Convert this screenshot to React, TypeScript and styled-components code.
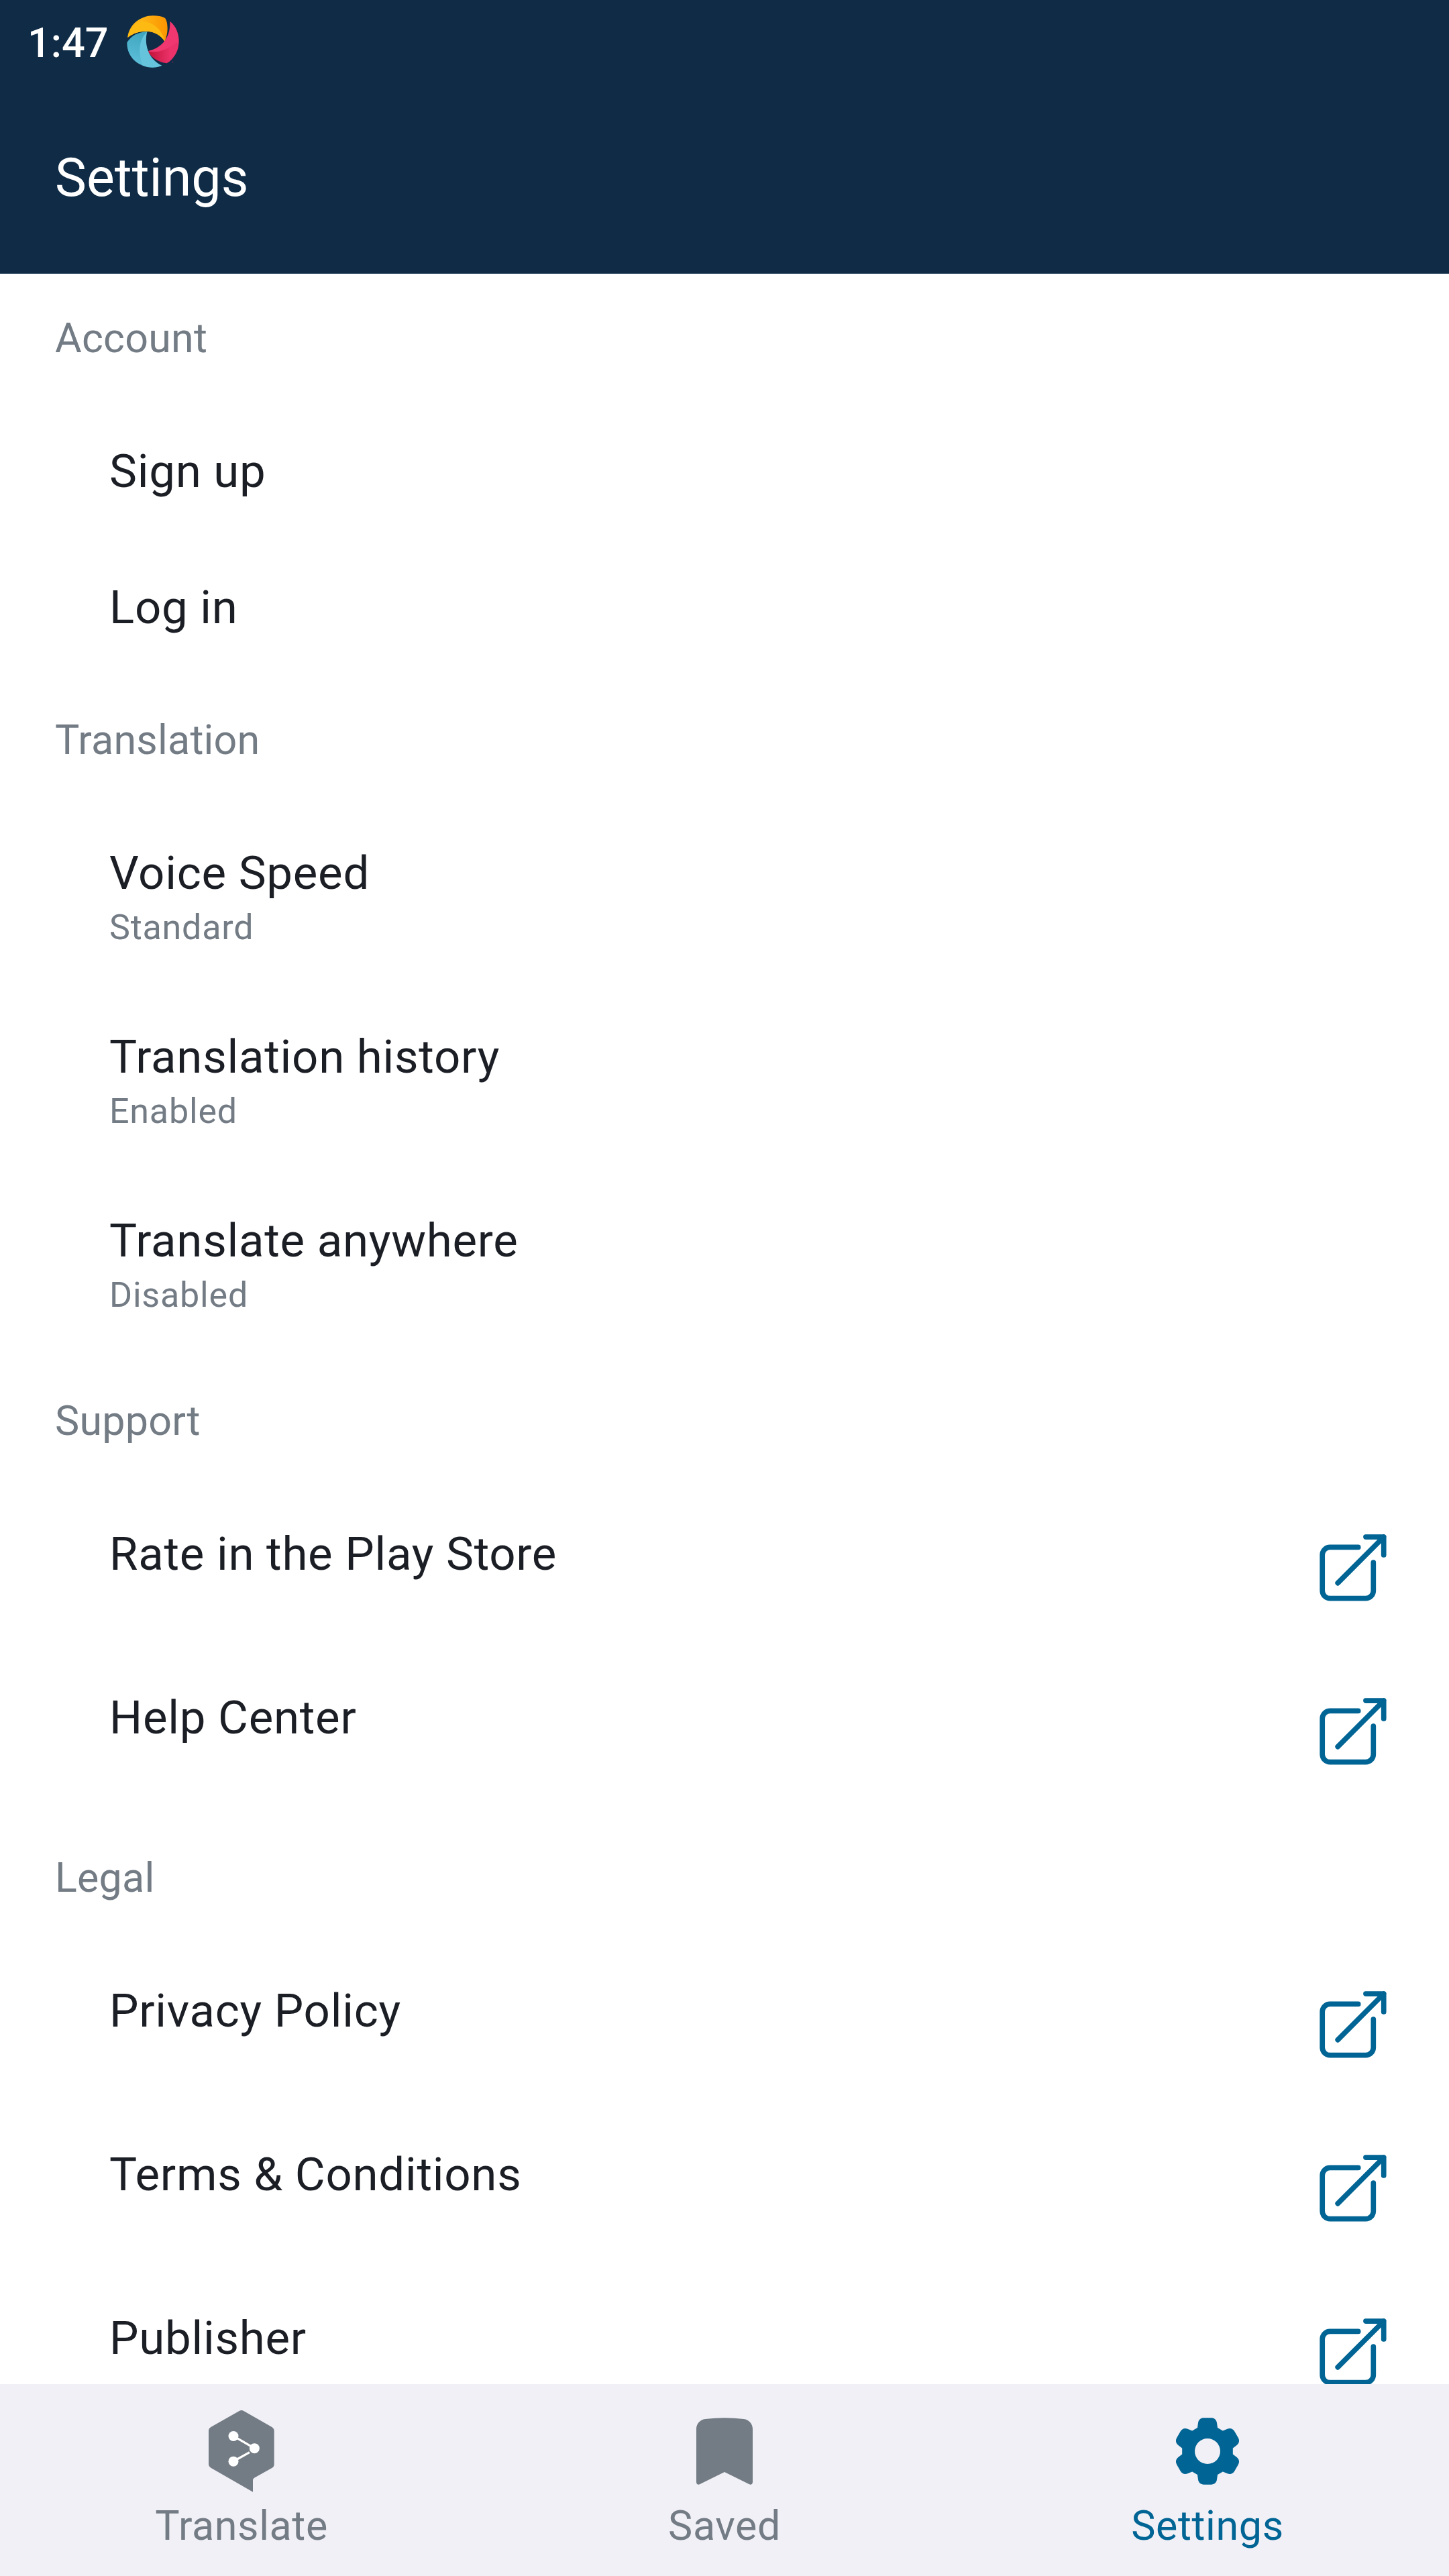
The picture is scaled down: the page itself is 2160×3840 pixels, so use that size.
import React from "react";
import styled, { createGlobalStyle } from "styled-components";

const color = {
  navy: "#0f2b46",
  blue: "#006494",
  grey: "#737b84",
  ink: "#1b1e25",
  bar: "#f1f0f6",
};

const GlobalStyle = createGlobalStyle`
  *, *::before, *::after { box-sizing: border-box; }
  body {
    margin: 0;
    background: #fff;
    font-family: Roboto, "Noto Sans", sans-serif;
  }
`;

const Screen = styled.div`
  display: flex;
  flex-direction: column;
  width: 2160px;
  height: 3840px;
  overflow: hidden;
`;

const Header = styled.header`
  flex: none;
  background: ${color.navy};
  color: #fff;
`;

const StatusBar = styled.div`
  display: flex;
  align-items: center;
  gap: 27.500px;
  height: 123px;
  padding-left: 41px;
`;

const Clock = styled.span`
  padding-top: 4px;
  font-size: 61.3px;
  font-weight: 500;
  line-height: 72px;
`;

const AppBar = styled.div`
  display: flex;
  align-items: center;
  height: 285px;
  padding: 0 82px 1px;
`;

const Title = styled.h1`
  margin: 0;
  font-size: 79px;
  font-weight: 400;
  line-height: 92px;
`;

const Content = styled.main`
  flex: 1;
  min-height: 0;
  overflow: hidden;
`;

const SectionTitle = styled.h2`
  height: 193px;
  margin: 0;
  padding: 60px 82px 0;
  color: ${color.grey};
  font-size: 61px;
  font-weight: 400;
  line-height: 72px;
  letter-spacing: 0.2px;
`;

const Row = styled.div`
  display: flex;
  justify-content: space-between;
  padding: 61px 82px 61px 163px;
`;

const RowText = styled.div`
  display: flex;
  flex-direction: column;
`;

const RowTitle = styled.span`
  color: ${color.ink};
  font-size: 69px;
  line-height: 81px;
  letter-spacing: 0.72px;
`;

const RowValue = styled.span`
  margin-top: 10px;
  color: ${color.grey};
  font-size: 52px;
  line-height: 61px;
  letter-spacing: 0.8px;
`;

const Icon = styled.svg`
  display: block;
  flex: none;
  width: 122px;
  height: 122px;
`;

const NavBar = styled.nav`
  display: grid;
  flex: none;
  grid-template-columns: repeat(3, 1fr);
  height: 286px;
  background: ${color.bar};
`;

const NavItem = styled.div<{ $active?: boolean }>`
  display: flex;
  flex-direction: column;
  align-items: center;
  gap: 14px;
  padding-top: 39px;
  color: ${(p) => (p.$active ? color.blue : color.grey)};
`;

const NavLabel = styled.span`
  font-size: 61px;
  line-height: 72px;
  letter-spacing: 0.6px;
`;

const LogoSvg = styled.svg`
  display: block;
  width: 78px;
  height: 78px;
`;

function AppLogo() {
  return (
    <LogoSvg viewBox="566 67 234 234">
      <defs>
        <linearGradient id="orange" x1="0" x2="1">
          <stop offset="0.35" stopColor="#fdb515" />
          <stop offset="1" stopColor="#fb9400" />
        </linearGradient>
        <linearGradient id="red" x1="0" x2="1">
          <stop offset="0" stopColor="#bf1238" />
          <stop offset="0.75" stopColor="#ec326a" />
        </linearGradient>
        <linearGradient id="teal" x1="0.6" y1="0" x2="0.4" y2="1">
          <stop offset="0" stopColor="#3fa5bf" />
          <stop offset="1" stopColor="#5fc0da" />
        </linearGradient>
      </defs>
      <path fill="url(#orange)" d="M570 166C575 108 628 68 683 68C704 68 722 71 736 78C744 84 748 106 748 126C748 146 742 166 736 184C720 156 689 138 652 138C621 138 594 147 570 166Z" />
      <path fill="#fdba12" d="M570 166C575 130 597 106 626 94C682 92 725 130 736 184C720 156 689 138 652 138C621 138 594 147 570 166Z" />
      <path fill="url(#red)" d="M659 227C710 227 756 196 785 186L797 205C791 236 773 264 745 281C706 276 678 258 659 227Z" />
      <path fill="#f0376f" d="M759 93C783 112 798 143 799 178C799 188 798 197 797 205C793 200 789 195 788 189C752 216 708 238 659 227C722 213 762 169 759 93Z" />
      <path fill="url(#teal)" d="M567 188C588 156 618 141 657 140C640 185 625 240 640 292C598 278 566 240 567 188Z" />
      <path fill="#65c3dc" d="M657 140C643 196 661 262 723 291C710 297 696 300 681 300C665 300 650 297 637 291C616 235 618 177 657 140Z" />
      <text x="766" y="282" fill="#ec326a" fontSize="12" fontWeight="700">™</text>
    </LogoSvg>
  );
}

function ExternalIcon() {
  return (
    <Icon viewBox="0 0 122 122" fill="none" stroke={color.blue} strokeWidth="7.7" strokeLinecap="round" strokeLinejoin="round">
      <path d="M68.7 30.4H26.8A11.5 11.5 0 0 0 15.2 42V95.2A11.5 11.5 0 0 0 26.8 106.7H79.8A11.5 11.5 0 0 0 91.3 95.2V53.2" />
      <path d="M38.2 83.8L106.7 15.1M79.9 15.1H106.7V41.9" />
    </Icon>
  );
}

function TranslateIcon() {
  return (
    <Icon viewBox="297 159 366 366">
      <path fill="currentColor" d="M470 162Q480 156 490 162L616 234Q626 241 626 251V401Q626 411 616 417L537 461Q531 465 531 471V524L343 416Q333 410 333 400V251Q333 241 343 234Z" />
      <path stroke="#fff" strokeWidth="10" d="M444 274L538 329M444 387L516 347" />
      <circle cx="444" cy="274.500" r="22.500" fill="#fff" />
      <circle cx="538" cy="329" r="22.500" fill="#fff" />
      <circle cx="444" cy="387.500" r="22.500" fill="#fff" />
    </Icon>
  );
}

function SavedIcon() {
  return (
    <Icon viewBox="177 159 366 366" fill="currentColor">
      <path d="M234 242C234 219 252 200 274 198Q360 187 446 198C468 200 486 219 486 242V480C486 488 479 494 471 490L360 435L249 490C241 494 234 488 234 480Z" />
    </Icon>
  );
}

// One tooth of the gear, centred on the origin and pointing up.
const tooth: [number, number][] = [
  [-45, -105], [-42, -127],
  [-40, -141], [-30, -149], [-16, -149],
  [16, -149],
  [30, -149], [40, -141], [42, -127],
  [45, -105],
];

function gearPath() {
  const parts: string[] = [];
  for (let i = 0; i < 6; i++) {
    const a = (i * Math.PI) / 3;
    const p = tooth.map(([x, y]) =>
      `${(x * Math.cos(a) - y * Math.sin(a)).toFixed(2)} ${(x * Math.sin(a) + y * Math.cos(a)).toFixed(2)}`
    );
    parts.push(`${i ? "L" : "M"}${p[0]}L${p[1]}C${p[2]} ${p[3]} ${p[4]}L${p[5]}C${p[6]} ${p[7]} ${p[8]}L${p[9]}`);
  }
  return `${parts.join("")}ZM57 0A57 57 0 1 0 -57 0A57 57 0 1 0 57 0Z`;
}

function GearIcon() {
  return (
    <Icon viewBox="-183 -183 366 366" fill="currentColor">
      <path fillRule="evenodd" d={gearPath()} />
    </Icon>
  );
}

type Item = { title: string; value?: string; external?: boolean };

const sections: { title: string; items: Item[] }[] = [
  { title: "Account", items: [{ title: "Sign up" }, { title: "Log in" }] },
  {
    title: "Translation",
    items: [
      { title: "Voice Speed", value: "Standard" },
      { title: "Translation history", value: "Enabled" },
      { title: "Translate anywhere", value: "Disabled" },
    ],
  },
  {
    title: "Support",
    items: [
      { title: "Rate in the Play Store", external: true },
      { title: "Help Center", external: true },
    ],
  },
  {
    title: "Legal",
    items: [
      { title: "Privacy Policy", external: true },
      { title: "Terms & Conditions", external: true },
      { title: "Publisher", external: true },
    ],
  },
];

export default function App() {
  return (
    <Screen>
      <GlobalStyle />
      <Header>
        <StatusBar>
          <Clock>1:47</Clock>
          <AppLogo />
        </StatusBar>
        <AppBar>
          <Title>Settings</Title>
        </AppBar>
      </Header>
      <Content>
        {sections.map((section) => (
          <section key={section.title}>
            <SectionTitle>{section.title}</SectionTitle>
            {section.items.map((item) => (
              <Row key={item.title}>
                <RowText>
                  <RowTitle>{item.title}</RowTitle>
                  {item.value && <RowValue>{item.value}</RowValue>}
                </RowText>
                {item.external && <ExternalIcon />}
              </Row>
            ))}
          </section>
        ))}
      </Content>
      <NavBar>
        <NavItem>
          <TranslateIcon />
          <NavLabel>Translate</NavLabel>
        </NavItem>
        <NavItem>
          <SavedIcon />
          <NavLabel>Saved</NavLabel>
        </NavItem>
        <NavItem $active>
          <GearIcon />
          <NavLabel>Settings</NavLabel>
        </NavItem>
      </NavBar>
    </Screen>
  );
}
